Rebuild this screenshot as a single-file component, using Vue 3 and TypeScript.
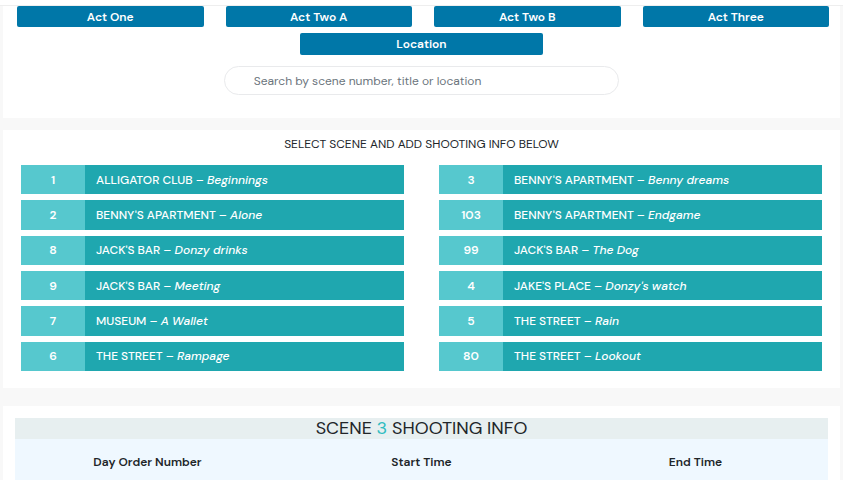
<script setup lang="ts">
import { ref } from 'vue'

interface Scene {
  number: number
  location: string
  title: string
}

const acts: string[] = ['Act One', 'Act Two A', 'Act Two B', 'Act Three']

const scenes: Scene[] = [
  { number: 1, location: 'ALLIGATOR CLUB', title: 'Beginnings' },
  { number: 3, location: "BENNY'S APARTMENT", title: 'Benny dreams' },
  { number: 2, location: "BENNY'S APARTMENT", title: 'Alone' },
  { number: 103, location: "BENNY'S APARTMENT", title: 'Endgame' },
  { number: 8, location: "JACK'S BAR", title: 'Donzy drinks' },
  { number: 99, location: "JACK'S BAR", title: 'The Dog' },
  { number: 9, location: "JACK'S BAR", title: 'Meeting' },
  { number: 4, location: "JAKE'S PLACE", title: "Donzy's watch" },
  { number: 7, location: 'MUSEUM', title: 'A Wallet' },
  { number: 5, location: 'THE STREET', title: 'Rain' },
  { number: 6, location: 'THE STREET', title: 'Rampage' },
  { number: 80, location: 'THE STREET', title: 'Lookout' },
]

const fields: string[] = ['Day Order Number', 'Start Time', 'End Time']

const search = ref('')
const selected = ref(3)
</script>

<template>
  <div class="page">
    <header class="topbar"></header>

    <section class="card filters">
      <nav class="acts">
        <button v-for="act in acts" :key="act" type="button" class="filter">{{ act }}</button>
      </nav>
      <button type="button" class="filter location">Location</button>
      <input
        v-model="search"
        type="search"
        class="search"
        placeholder="Search by scene number, title or location"
        aria-label="Search by scene number, title or location"
      />
    </section>

    <section class="card picker">
      <h2 class="prompt">SELECT SCENE AND ADD SHOOTING INFO BELOW</h2>
      <div class="scenes">
        <button
          v-for="scene in scenes"
          :key="scene.number"
          type="button"
          class="scene"
          @click="selected = scene.number"
        >
          <span class="number">{{ scene.number }}</span>
          <span class="name">{{ scene.location }} – <em>{{ scene.title }}</em></span>
        </button>
      </div>
    </section>

    <section class="card info">
      <h1 class="heading">SCENE <span class="accent">{{ selected }}</span> SHOOTING INFO</h1>
      <div class="fields">
        <span v-for="field in fields" :key="field" class="field">{{ field }}</span>
      </div>
    </section>
  </div>
</template>

<style>
body {
  background: #f8f8f8;
}
</style>

<style scoped>
.page {
  font-family: 'DM Sans', 'Open Sans', 'Noto Sans', sans-serif;
  font-size: 12px;
  line-height: 16px;
  color: #212529;
}

.topbar {
  height: 5px;
  border-bottom: 1px solid #eee;
  background: #fff;
}

.card {
  margin: 0 3px;
  background: #fff;
}

.filters {
  display: flex;
  flex-direction: column;
  align-items: center;
  padding-bottom: 23px;
}

.acts {
  display: grid;
  grid-template-columns: repeat(4, 1fr);
  grid-template-rows: 21px;
  gap: 22px;
  align-self: stretch;
  padding: 0 11px 0 14px;
}

.filter {
  padding: 0;
  border: 0;
  border-radius: 2px;
  background: #0077a8;
  color: #fff;
  font: 600 12px/16px 'DM Sans', 'Open Sans', 'Noto Sans', sans-serif;
}

.location {
  width: 29%;
  height: 22px;
  margin-top: 6px;
}

.search {
  box-sizing: border-box;
  width: calc(50% - 23px);
  height: 29px;
  margin-top: 11px;
  padding: 0 29px;
  border: 1px solid #e9eaec;
  border-radius: 15px;
  outline: 0;
  background: #fff;
  color: #495057;
  font: 400 12px/16px 'DM Sans', 'Open Sans', 'Noto Sans', sans-serif;
  appearance: none;
}

.search::placeholder {
  color: #6c757d;
  opacity: 1;
}

.picker {
  margin-top: 12px;
  padding: 6px 18px 17px;
}

.prompt {
  margin: 0;
  font-size: 12px;
  font-weight: 400;
  line-height: 16px;
  text-align: center;
}

.scenes {
  display: grid;
  grid-template-columns: 1fr 1fr;
  grid-template-rows: repeat(6, 1fr);
  gap: 6px 35px;
  height: 206px;
  margin-top: 13px;
}

.scene {
  display: flex;
  padding: 0;
  border: 0;
  background: #1fa7af;
  color: #fff;
  font: 500 12px/16px 'DM Sans', 'Open Sans', 'Noto Sans', sans-serif;
  text-align: left;
}

.number {
  display: flex;
  align-items: center;
  justify-content: center;
  align-self: stretch;
  width: 64px;
  background: #56c8ce;
  font-weight: 600;
}

.name {
  align-self: center;
  padding-left: 11px;
}

.info {
  margin-top: 18px;
  padding: 12px 12px 0;
}

.heading {
  margin: 0;
  background: #e7eff0;
  font-size: 18px;
  font-weight: 400;
  line-height: 21px;
  text-align: center;
}

.accent {
  color: #2fbcc0;
}

.fields {
  display: grid;
  grid-template-columns: repeat(3, 1fr);
  gap: 9px;
  padding: 15px 0 10px;
  background: #eff8ff;
}

.field {
  font-weight: 600;
  text-align: center;
}
</style>
